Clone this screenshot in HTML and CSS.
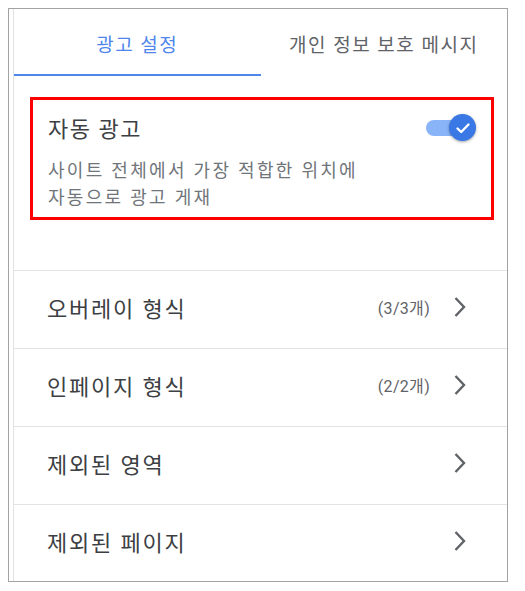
FILE: index.html
```html
<!DOCTYPE html>
<html lang="ko">
<head>
  <meta charset="UTF-8">
  <meta name="viewport" content="width=device-width, initial-scale=1.0">
  <title>광고 설정</title>
  <link rel="stylesheet" href="styles.css">
</head>
<body>

  <div class="frame">
    <div class="panel">

      <!-- Tabs -->
      <div class="tabs">
        <div class="tab active">광고 설정</div>
        <div class="tab">개인 정보 보호 메시지</div>
      </div>

      <!-- Auto ads -->
      <section class="auto-ads">
        <div class="auto-head">
          <h2>자동 광고</h2>
          <div class="toggle">
            <span class="track"></span>
            <span class="knob">
              <svg width="16" height="16" viewBox="0 0 16 16"><polyline points="2.5,8.5 6.2,12 13.5,4.5" fill="none" stroke="#fff" stroke-width="2.4" stroke-linecap="round" stroke-linejoin="round"/></svg>
            </span>
          </div>
        </div>
        <p>사이트 전체에서 가장 적합한 위치에<br>자동으로 광고 게재</p>
      </section>

      <!-- Settings list -->
      <div class="list">
        <div class="row">
          <span class="label">오버레이 형식</span>
          <span class="count">(3/3개)</span>
          <svg class="chev" width="14" height="22" viewBox="0 0 14 22"><polyline points="2.5,2 11,11 2.5,20" fill="none" stroke="#5f6368" stroke-width="2.4"/></svg>
        </div>
        <div class="row">
          <span class="label">인페이지 형식</span>
          <span class="count">(2/2개)</span>
          <svg class="chev" width="14" height="22" viewBox="0 0 14 22"><polyline points="2.5,2 11,11 2.5,20" fill="none" stroke="#5f6368" stroke-width="2.4"/></svg>
        </div>
        <div class="row">
          <span class="label">제외된 영역</span>
          <svg class="chev" width="14" height="22" viewBox="0 0 14 22"><polyline points="2.5,2 11,11 2.5,20" fill="none" stroke="#5f6368" stroke-width="2.4"/></svg>
        </div>
        <div class="row">
          <span class="label">제외된 페이지</span>
          <svg class="chev" width="14" height="22" viewBox="0 0 14 22"><polyline points="2.5,2 11,11 2.5,20" fill="none" stroke="#5f6368" stroke-width="2.4"/></svg>
        </div>
      </div>

    </div>
  </div>

</body>
</html>
```

FILE: styles.css
```css
* { margin: 0; padding: 0; box-sizing: border-box; }
body {
  margin: 8px;
  background: #fff;
  font-family: Roboto, "Noto Sans CJK KR", sans-serif;
}

.frame {
  width: 500px; height: 574px;
  border: 1px solid #a3a3a3;
  padding-left: 4px;
}
.panel {
  height: 100%;
  border-left: 1px solid #e2e2e2;
}

/* Tabs */
.tabs { display: flex; }
.tab {
  flex: 1;
  height: 67px;
  display: flex; align-items: center; justify-content: center;
  padding-top: 3px;
  font-size: 19px; letter-spacing: 1.5px; color: #5f6368;
  border-bottom: 2px solid transparent;
}
.tab.active { color: #4f86ec; border-bottom-color: #4f86ec; }

/* Auto ads box */
.auto-ads {
  margin: 21px 13px 50px 16px;
  height: 123px;
  border: 3px solid #ff0000;
  padding: 15px 15px 0 15px;
}
.auto-head {
  display: flex; align-items: center; justify-content: space-between;
  height: 30px;
}
.auto-head h2 {
  font-size: 22px; font-weight: normal; letter-spacing: 1.5px;
  color: #3c4043; line-height: 30px;
}
.auto-ads p {
  margin-top: 12px;
  font-size: 18px; letter-spacing: 2.3px; line-height: 27px; color: #70757a;
}

.toggle {
  position: relative;
  width: 50px; height: 28px;
  margin-bottom: 4px;
}
.toggle .track {
  position: absolute; left: 0; top: 6px;
  width: 40px; height: 16px; border-radius: 8px;
  background: #8ab4f8;
}
.toggle .knob {
  position: absolute; right: 0; top: 0;
  width: 27px; height: 27px; border-radius: 50%;
  background: #3a78e6;
  box-shadow: 0 1px 3px rgba(0,0,0,0.35);
  display: flex; align-items: center; justify-content: center;
}

/* List */
.row {
  height: 78px;
  border-top: 1px solid #e3e3e3;
  display: flex; align-items: center;
  padding: 0 40px 5px 33px;
}
.row .label {
  flex: 1;
  font-size: 22px; letter-spacing: 1.8px; color: #3c4043;
}
.row .count {
  font-size: 16px; letter-spacing: 0.3px; color: #5f6368;
  margin-right: 23px;
}
.row .chev { display: block; }
```
